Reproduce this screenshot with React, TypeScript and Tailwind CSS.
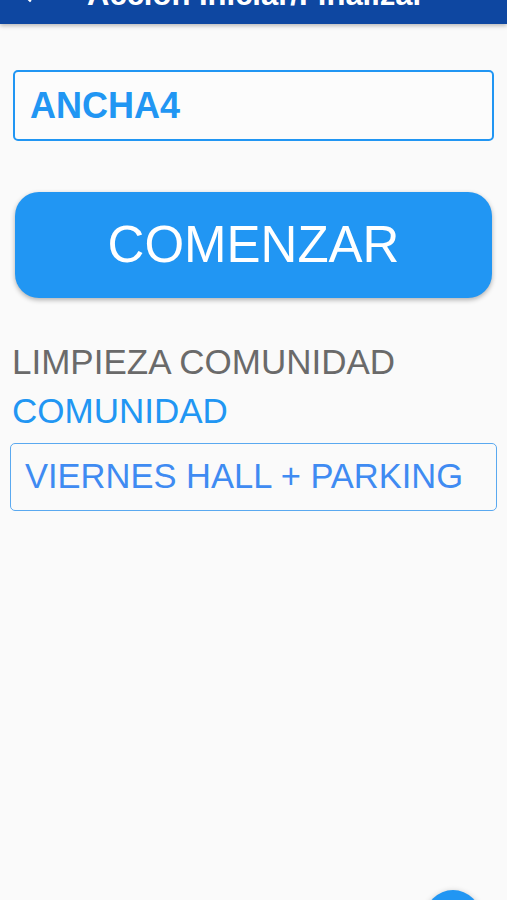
import React from "react";

export default function App() {
  const font = { fontFamily: '"Liberation Sans", Arial, sans-serif' };
  return (
    <div className="relative h-[900px] w-full overflow-hidden bg-[#fafafa]" style={font}>
      <header className="relative h-[24px] overflow-hidden bg-[#0e47a1] shadow-[0_2px_4px_rgba(0,0,0,0.25)]">
        <div className="-mt-[21px] flex items-start">
          <svg viewBox="0 0 24 24" className="ml-[16px] h-[28px] w-[28px] fill-white">
            <path d="M20 11H7.83l5.59-5.59L12 4l-8 8 8 8 1.41-1.41L7.83 13H20v-2z" />
          </svg>
          <span className="ml-[43px] text-[31px] font-bold leading-[31px] text-white whitespace-nowrap">
            Acción Iniciar/Finalizar
          </span>
        </div>
      </header>

      <main className="flex flex-col px-[10px]">
        <div className="mx-[3px] mt-[46px] flex h-[71px] items-center rounded-[5px] border-2 border-[#2196f3] bg-[#fcfcfc] pl-[15px]">
          <span className="text-[36px] font-bold text-[#2196f3]">ANCHA4</span>
        </div>

        <button className="mx-[5px] mt-[51px] flex h-[106px] items-center justify-center rounded-[24px] bg-[#2196f3] shadow-[0_2px_5px_rgba(0,0,0,0.3)]">
          <span className="text-[51px] text-white">COMENZAR</span>
        </button>

        <div className="ml-[2px] mt-[39px] text-[35px] leading-[49px] text-[#6a6a6a]">LIMPIEZA COMUNIDAD</div>
        <div className="ml-[2px] text-[35px] leading-[49px] text-[#2196f3]">COMUNIDAD</div>

        <div className="mt-[8px] flex h-[68px] items-center rounded-[5px] border border-[#5aa9f0] pl-[14px]">
          <span className="text-[34.5px] text-[#3f8bf2]">VIERNES HALL + PARKING</span>
        </div>
      </main>

      <div className="absolute left-[425px] top-[890px] h-[56px] w-[56px] rounded-full bg-[#2196f3] shadow-[0_2px_6px_rgba(0,0,0,0.3)]" />
    </div>
  );
}
